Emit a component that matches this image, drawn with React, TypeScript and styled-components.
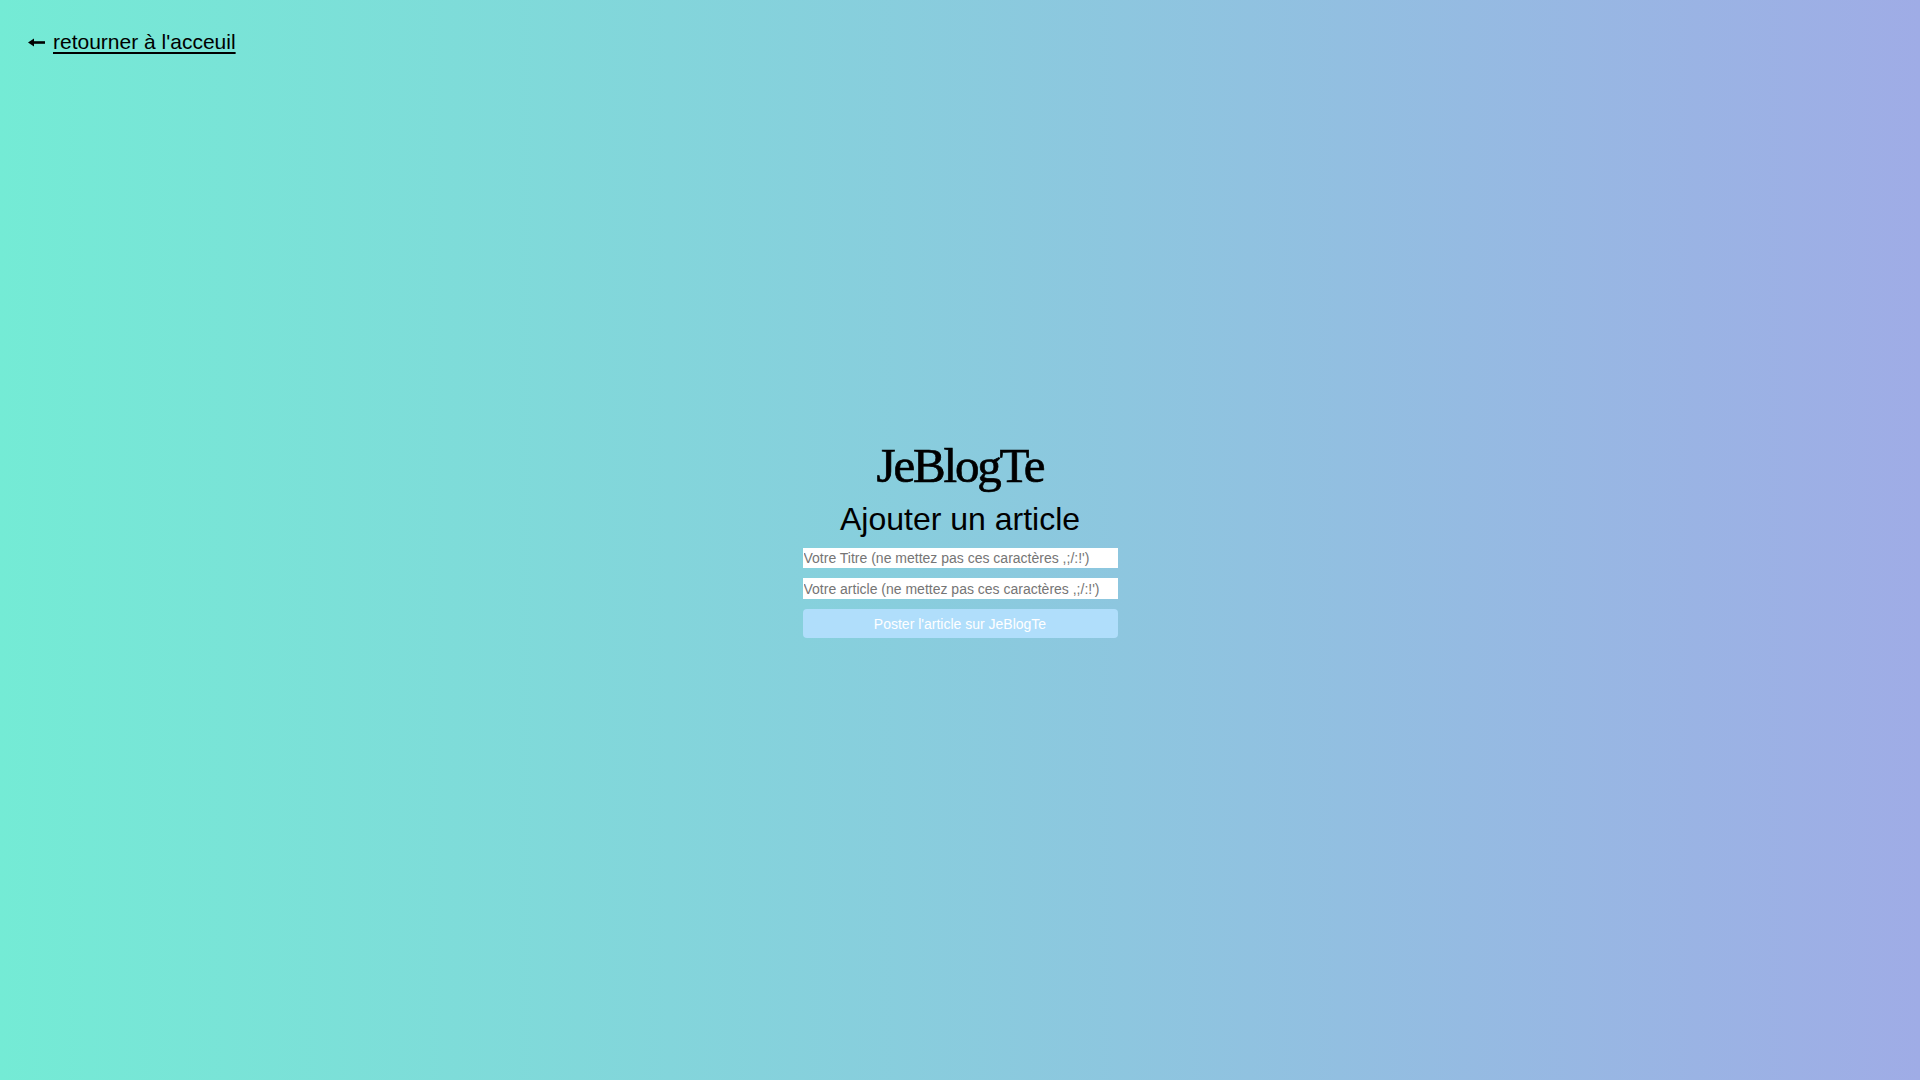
import React from "react";
import styled, { createGlobalStyle } from "styled-components";

const GlobalStyle = createGlobalStyle`
  html, body {
    margin: 0;
    padding: 0;
  }
  body {
    font-family: "Liberation Sans", Arial, sans-serif;
    color: #000;
  }
  * { box-sizing: border-box; }
`;

const Page = styled.div`
  min-height: 100vh;
  display: grid;
  grid-template-rows: 1fr auto 1fr;
  background: linear-gradient(90deg, #74ebd5 0%, #9face6 100%);
`;

const TopBar = styled.header`
  align-self: start;
  display: flex;
  align-items: center;
  gap: 8px;
  padding: 30px 0 0 28px;
`;

const BackLink = styled.a`
  font-size: 21px;
  line-height: 24px;
  color: #000;
  text-decoration: underline;
  text-underline-offset: 3px;
  cursor: pointer;
`;

const ArrowIcon = styled.svg`
  display: block;
  width: 17px;
  height: 9px;
  margin-top: 1px;
`;

const Main = styled.main`
  display: flex;
  flex-direction: column;
  align-items: center;
`;

const Title = styled.h1`
  margin: 0 0 10px;
  font-family: "Liberation Serif", "Times New Roman", serif;
  font-weight: 400;
  font-size: 49px;
  letter-spacing: -2.2px;
  line-height: 48px;
  -webkit-text-stroke: 0.7px #000;
`;

const Subtitle = styled.h2`
  margin: 0 0 10px;
  font-weight: 400;
  font-size: 32px;
  line-height: 38px;
`;

const Form = styled.form`
  display: flex;
  flex-direction: column;
  gap: 10px;
  width: 315px;
`;

const Field = styled.input<{ $tall?: boolean }>`
  width: 100%;
  height: ${(p) => (p.$tall ? "21px" : "20px")};
  border: none;
  outline: none;
  padding: 0 1px;
  background: #fff;
  font-family: "Liberation Sans", Arial, sans-serif;
  font-size: 14px;
  color: #333;
  &::placeholder {
    color: #757575;
  }
`;

const Submit = styled.button`
  height: 29px;
  border: none;
  border-radius: 4px;
  background: #b0defb;
  color: #fff;
  font-family: "Liberation Sans", Arial, sans-serif;
  font-size: 14px;
  cursor: pointer;
`;

export default function App() {
  return (
    <>
      <GlobalStyle />
      <Page>
        <TopBar>
          <ArrowIcon viewBox="0 0 17 9" aria-hidden="true">
            <path d="M0 4.5 L6 0.5 V8.5 Z" fill="#000" />
            <rect x="4" y="3.2" width="13" height="2.6" fill="#000" />
          </ArrowIcon>
          <BackLink href="#">retourner à l'acceuil</BackLink>
        </TopBar>
        <Main>
          <Title>JeBlogTe</Title>
          <Subtitle>Ajouter un article</Subtitle>
          <Form onSubmit={(e) => e.preventDefault()}>
            <Field placeholder="Votre Titre (ne mettez pas ces caractères ,;/:!')" />
            <Field $tall placeholder="Votre article (ne mettez pas ces caractères ,;/:!')" />
            <Submit type="submit">Poster l'article sur JeBlogTe</Submit>
          </Form>
        </Main>
        <div />
      </Page>
    </>
  );
}
